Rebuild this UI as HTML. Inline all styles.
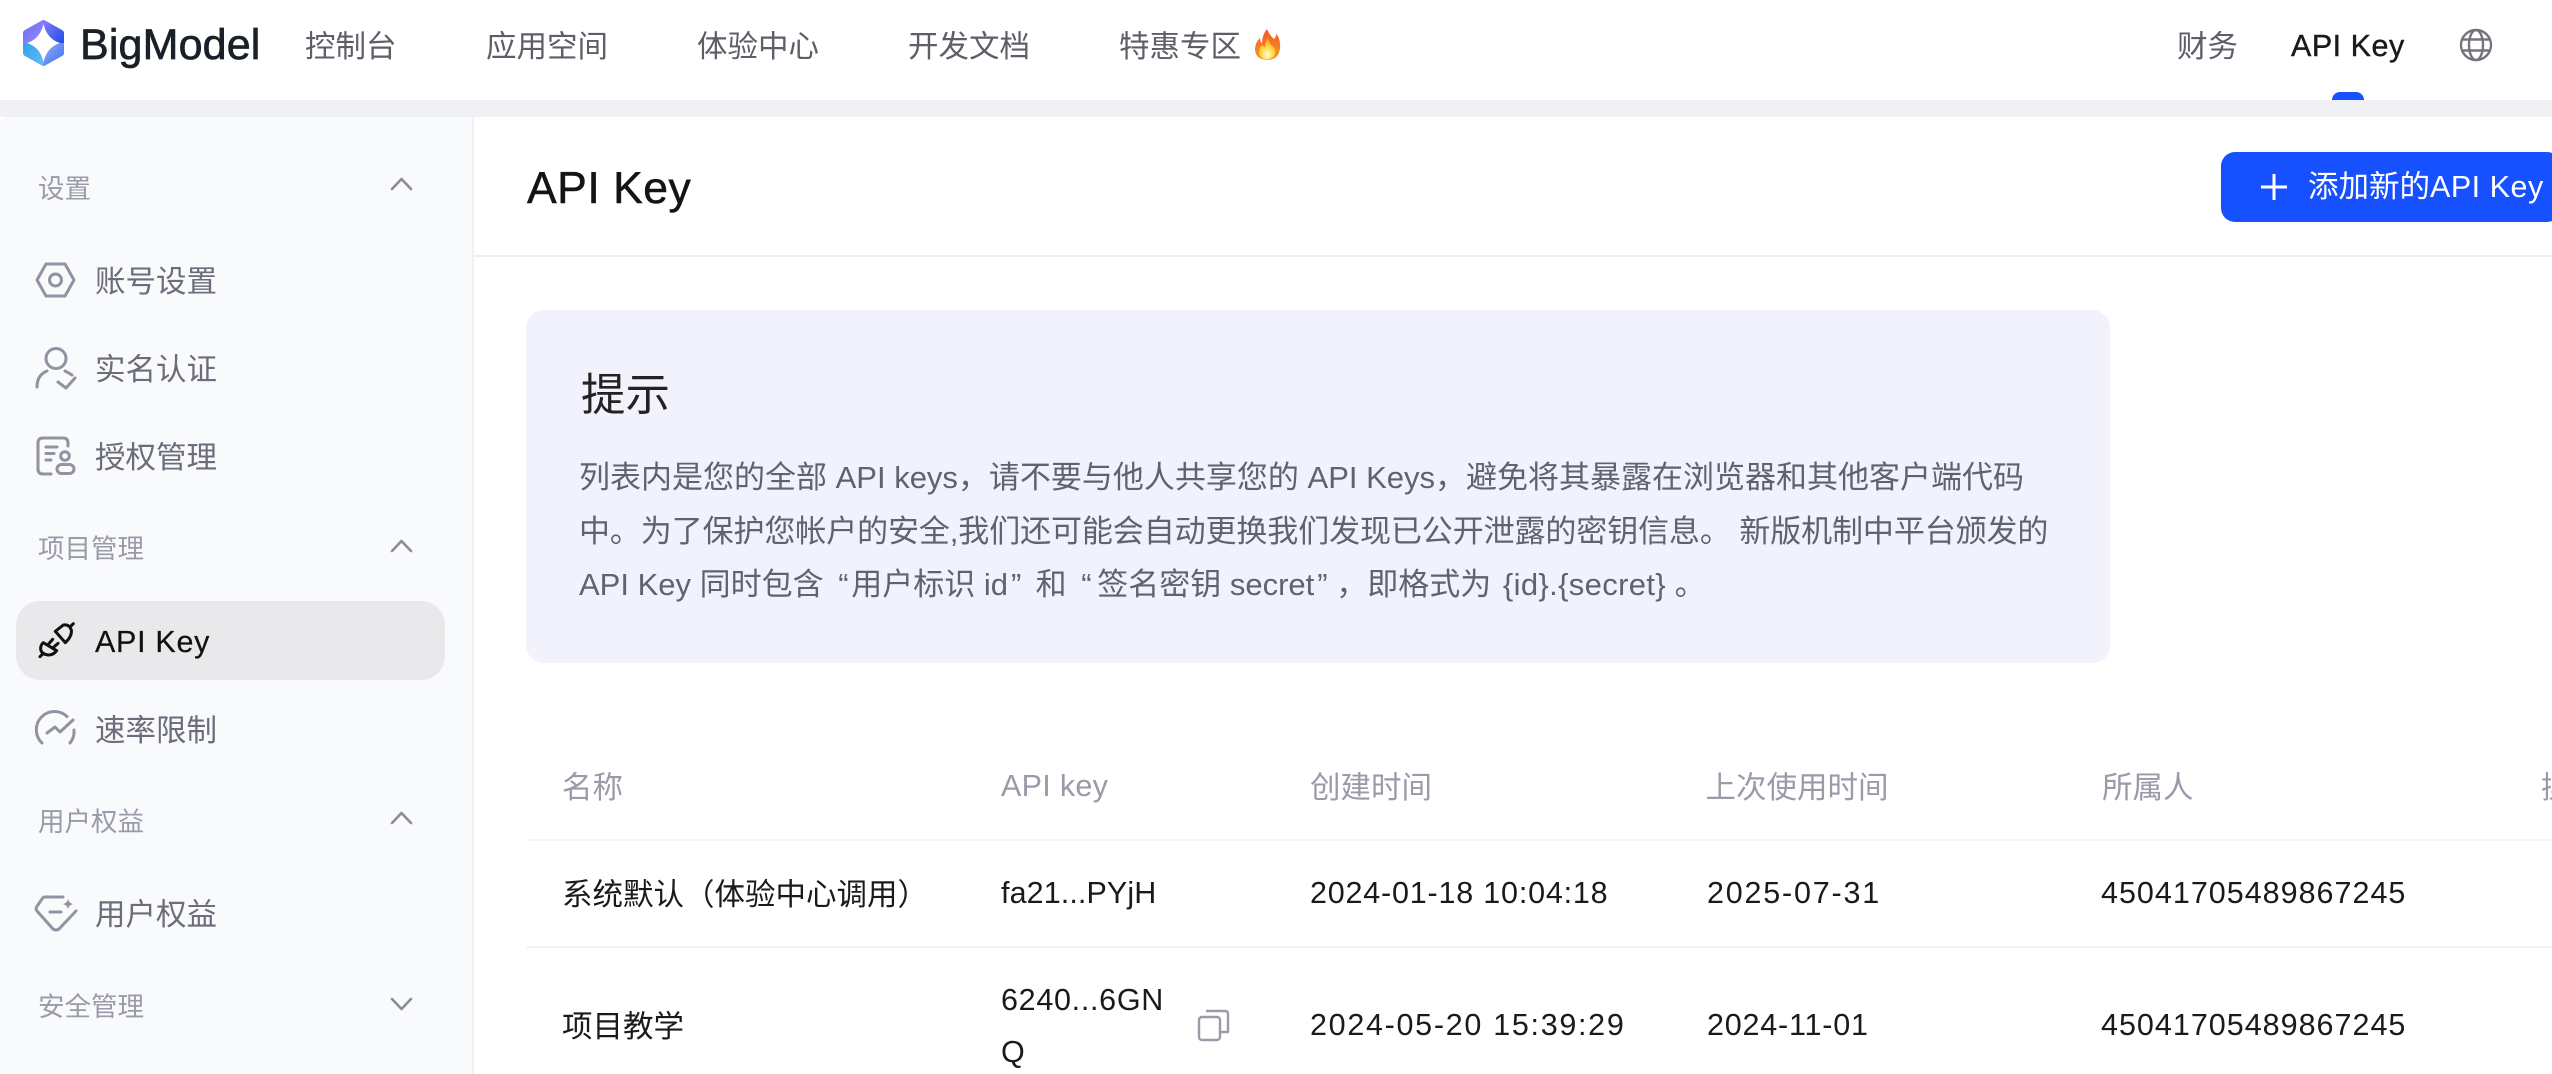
<!DOCTYPE html>
<html lang="zh-CN"><head><meta charset="utf-8"><title>API Key</title>
<style>
html,body{margin:0;padding:0;width:2552px;height:1074px;overflow:hidden;background:#fff}
body{position:relative;font-family:"Liberation Sans","Noto Sans CJK SC",sans-serif;font-size:30.5px;color:#1a1a1a}
.b{position:absolute}
.t{position:absolute;white-space:nowrap;line-height:40px;height:40px}
.nav{color:#5e5e68}
.sec{color:#9a9aa8;font-size:26.5px}
.it{color:#6c6c7a}
.th{color:#9a9aa8}
.l{letter-spacing:.5px}
.p{color:#62626e;font-size:31px}
.q1{display:inline-block;width:13px;padding-left:6px}
.q2{display:inline-block;width:19px;padding-left:3px}
svg{position:absolute;left:0;top:0}
</style></head><body>
<div class="b" style="left:0;top:100px;width:2552px;height:17px;background:#f0f1f5"></div>
<div class="b" style="left:0;top:0;width:2552px;height:100px;background:#fff;border-bottom-left-radius:10px"></div>
<div class="b" style="left:0;top:117px;width:472px;height:957px;background:#f9fafc;border-top-left-radius:8px;border-right:2px solid #f0f1f5"></div>
<div class="b" style="left:474px;top:255px;width:2078px;height:2px;background:#eeeff2"></div>
<div class="b" style="left:2332px;top:92px;width:32px;height:8px;background:#1650ff;border-radius:8px 8px 0 0"></div>
<div class="b" style="left:2221px;top:152px;width:340px;height:70px;background:#1650ff;border-radius:14px"></div>
<div class="b" style="left:526px;top:310px;width:1584px;height:353px;background:#f1f2fb;border-radius:18px"></div>
<div class="b" style="left:16px;top:601px;width:429px;height:79px;background:#e9e9eb;border-radius:24px"></div>
<div class="b" style="left:526px;top:839px;width:2026px;height:2px;background:#f6f6f8"></div>
<div class="b" style="left:526px;top:946px;width:2026px;height:2px;background:#f4f4f6"></div>

<svg width="2552" height="1074" viewBox="0 0 2552 1074" fill="none">
<defs>
<linearGradient id="g1" x1="0" y1="0" x2="1" y2="1"><stop offset="0" stop-color="#5f6af0"/><stop offset="1" stop-color="#a08cff"/></linearGradient>
<linearGradient id="g2" x1="0" y1="0" x2="1" y2="1"><stop offset="0" stop-color="#8d7bfb"/><stop offset="1" stop-color="#1c4fe6"/></linearGradient>
<linearGradient id="g3" x1="0" y1="0" x2="1" y2="1"><stop offset="0" stop-color="#2ea3ea"/><stop offset="1" stop-color="#6cb9f6"/></linearGradient>
<linearGradient id="g4" x1="0" y1="0" x2="1" y2="1"><stop offset="0" stop-color="#98aaf8"/><stop offset="1" stop-color="#3a6ef2"/></linearGradient>
<linearGradient id="f1" x1="0" y1="0" x2="0" y2="1"><stop offset="0" stop-color="#f4562a"/><stop offset="1" stop-color="#f79a22"/></linearGradient>
<radialGradient id="f2" cx=".5" cy=".78" r=".65"><stop offset="0" stop-color="#fffbd0"/><stop offset=".55" stop-color="#ffdc48"/><stop offset="1" stop-color="#fbab24"/></radialGradient>
</defs>
<!-- logo -->
<path d="M43.5 20 L43.5 43 L23 43 L23 33 Q23 31 25 30 L41 21 Q42 20 43.5 20Z" fill="url(#g1)"/>
<path d="M43.5 20 Q45 20 46 21 L62 30 Q64 31 64 33 L64 43 L43.5 43Z" fill="url(#g2)"/>
<path d="M23 43 L43.5 43 L43.5 66 Q42 66 41 65 L25 56 Q23 55 23 53Z" fill="url(#g3)"/>
<path d="M43.5 43 L64 43 L64 53 Q64 55 62 56 L46 65 Q45 66 43.5 66Z" fill="url(#g4)"/>
<path d="M43.5 24 Q47 39 60 43 Q47 47 43.5 62 Q40 47 27 43 Q40 39 43.500 24Z" fill="#fff"/>
<!-- fire -->
<path d="M1267 29 Q1270 36 1274 39 Q1277 36 1276 33 Q1281 40 1280 48 Q1279 60 1267 60 Q1255 59 1255 49 Q1255 43 1260 38 Q1260 42 1262 43 Q1262 35 1267 29Z" fill="url(#f1)"/>
<path d="M1268 38 Q1269 44 1274 47 Q1277 52 1274 56 Q1270 60 1266 59.500 Q1259 58 1259 52 Q1259 47 1262 45 Q1264 47 1265 47 Q1265 42 1268 38Z" fill="url(#f2)"/>
<!-- globe -->
<g stroke="#74747f" stroke-width="2.400"><circle cx="2476" cy="45" r="15"/><ellipse cx="2476" cy="45" rx="7" ry="15"/><path d="M2463 39.500H2489M2463 50.500H2489"/></g>
<!-- plus -->
<path d="M2274 174V200M2261 187H2287" stroke="#fff" stroke-width="3"/>
<!-- chevrons -->
<g stroke="#8c8c99" stroke-width="2.600" stroke-linecap="round" stroke-linejoin="round">
<path d="M392 189L401.500 179L411 189"/><path d="M392 551L401.500 541L411 551"/><path d="M392 823L401.500 813L411 823"/><path d="M392 999L401.500 1009L411 999"/>
</g>
<!-- sidebar icons -->
<g stroke="#9292a2" stroke-width="3" stroke-linecap="round" stroke-linejoin="round">
<path d="M37 280L46 264H65L74 280L65 296H46Z"/><circle cx="55.500" cy="280" r="6"/>
<circle cx="56" cy="358.500" r="10"/><path d="M37 387Q37 375 47 371M65 371Q69 373 72 375"/><path d="M58 382L66 388L75 378"/>
<path d="M68 446V443Q68 438 63 438H43Q38 438 38 443V469Q38 474 43 474H51"/><path d="M46 447H57M46 453.500H54M46 460H51"/><circle cx="65" cy="456" r="4.300"/><rect x="57" y="464.500" width="17" height="9" rx="4.500"/>
<path d="M42 743A18 18 0 0 1 67 716.500"/><path d="M74 730A18 18 0 0 1 70 743"/><path d="M47 733L55 727L60 732L73 720"/>
<path d="M63 897H45Q43 897 42 899L36.500 907Q35.500 909 37 911L53 929Q56 931 59 929L76 911"/><path d="M50 912H61"/>
</g>
<path d="M68 899Q69 903 73 904Q69 905 68 909Q67 905 63 904Q67 903 68 899Z" fill="#9292a2"/>
<!-- plug -->
<g transform="translate(20 610) scale(.3333)" stroke="#111" stroke-width="9" stroke-linecap="round" stroke-linejoin="round">
<path d="M106 64L130 45Q148 42 154 60Q157 78 136 98Z"/><path d="M151 50L160 41"/>
<path d="M70 98L110 122Q100 135 85 135Q62 132 62 115Q62 105 70 98Z"/><path d="M60 140L70 130M84 104L98 88M98 114L114 100"/>
</g>
<!-- copy -->
<g stroke="#9a9aa8" stroke-width="2.400" stroke-linejoin="round">
<rect x="1199" y="1017" width="21" height="23" rx="3"/><path d="M1206 1011H1225Q1228 1011 1228 1014V1032H1220"/>
</g>
</svg>

<div class="t" style="left:80px;top:25px;font-size:43px;letter-spacing:.15px;color:#1a2029;-webkit-text-stroke:.7px #1a2029">BigModel</div>
<div class="t nav" style="left:305px;top:26.500px">控制台</div>
<div class="t nav" style="left:486px;top:26.500px">应用空间</div>
<div class="t nav" style="left:697px;top:26.500px">体验中心</div>
<div class="t nav" style="left:908px;top:26.500px">开发文档</div>
<div class="t nav" style="left:1119px;top:26.500px">特惠专区</div>
<div class="t nav" style="left:2177px;top:26.500px">财务</div>
<div class="t l" style="left:2291px;top:25.500px;-webkit-text-stroke:.4px #1a1a1a">API Key</div>
<div class="t" style="left:2308px;top:167px;color:#fff">添加新的<span class="l">API Key</span></div>
<div class="t" style="left:527px;top:168.500px;font-size:44.500px;letter-spacing:.5px;line-height:40px;color:#141414;-webkit-text-stroke:.5px #141414">API Key</div>
<div class="t" style="left:581px;top:375.500px;font-size:44.500px;color:#222">提示</div>

<div class="t p" style="left:579px;top:458px">列表内是您的全部 API keys，请不要与他人共享您的 API Keys，避免将其暴露在浏览器和其他客户端代码</div>
<div class="t p" style="left:579px;top:512px;letter-spacing:-.1px">中。为了保护您帐户的安全,我们还可能会自动更换我们发现已公开泄露的密钥信息。 新版机制中平台颁发的</div>
<div class="t p" style="left:579px;top:565px">API Key 同时包含 <span class="q1">“</span>用户标识 id<span class="q2" style="width:16px">”</span> 和 <span class="q1" style="width:16px">“</span>签名密钥 secret<span class="q2">”</span>，即格式为 <span style="margin-left:3px;letter-spacing:.35px">{id}.{secret}</span> 。</div>

<div class="t sec" style="left:38px;top:168.500px">设置</div>
<div class="t it" style="left:95px;top:261.500px">账号设置</div>
<div class="t it" style="left:95px;top:349.500px">实名认证</div>
<div class="t it" style="left:95px;top:437.500px">授权管理</div>
<div class="t sec" style="left:38px;top:528.500px">项目管理</div>
<div class="t" style="left:95px;top:622px;color:#111;letter-spacing:.7px;-webkit-text-stroke:.2px #111">API Key</div>
<div class="t it" style="left:95px;top:710.500px">速率限制</div>
<div class="t sec" style="left:38px;top:801.500px">用户权益</div>
<div class="t it" style="left:95px;top:894.500px">用户权益</div>
<div class="t sec" style="left:38px;top:986.500px">安全管理</div>

<div class="t th" style="left:562px;top:768px">名称</div>
<div class="t th" style="left:1001px;top:766px;letter-spacing:.3px">API key</div>
<div class="t th" style="left:1310px;top:768px">创建时间</div>
<div class="t th" style="left:1705.500px;top:768px">上次使用时间</div>
<div class="t th" style="left:2102px;top:768px">所属人</div>
<div class="t th" style="left:2541px;top:768px">操作</div>

<div class="t" style="left:562px;top:874.500px">系统默认（体验中心调用）</div>
<div class="t" style="left:1001px;top:873px;letter-spacing:.1px">fa21...PYjH</div>
<div class="t" style="left:1310px;top:873px;letter-spacing:.8px">2024-01-18 10:04:18</div>
<div class="t" style="left:1707px;top:873px;letter-spacing:1.8px">2025-07-31</div>
<div class="t" style="left:2101px;top:873px;letter-spacing:1px">45041705489867245</div>

<div class="t" style="left:562px;top:1006.500px">项目教学</div>
<div class="t" style="left:1001px;top:980px;letter-spacing:.7px">6240...6GN</div>
<div class="t" style="left:1001px;top:1032px">Q</div>
<div class="t" style="left:1310px;top:1005px;letter-spacing:1.7px">2024-05-20 15:39:29</div>
<div class="t" style="left:1707px;top:1005px;letter-spacing:.8px">2024-11-01</div>
<div class="t" style="left:2101px;top:1005px;letter-spacing:1px">45041705489867245</div>
</body></html>
